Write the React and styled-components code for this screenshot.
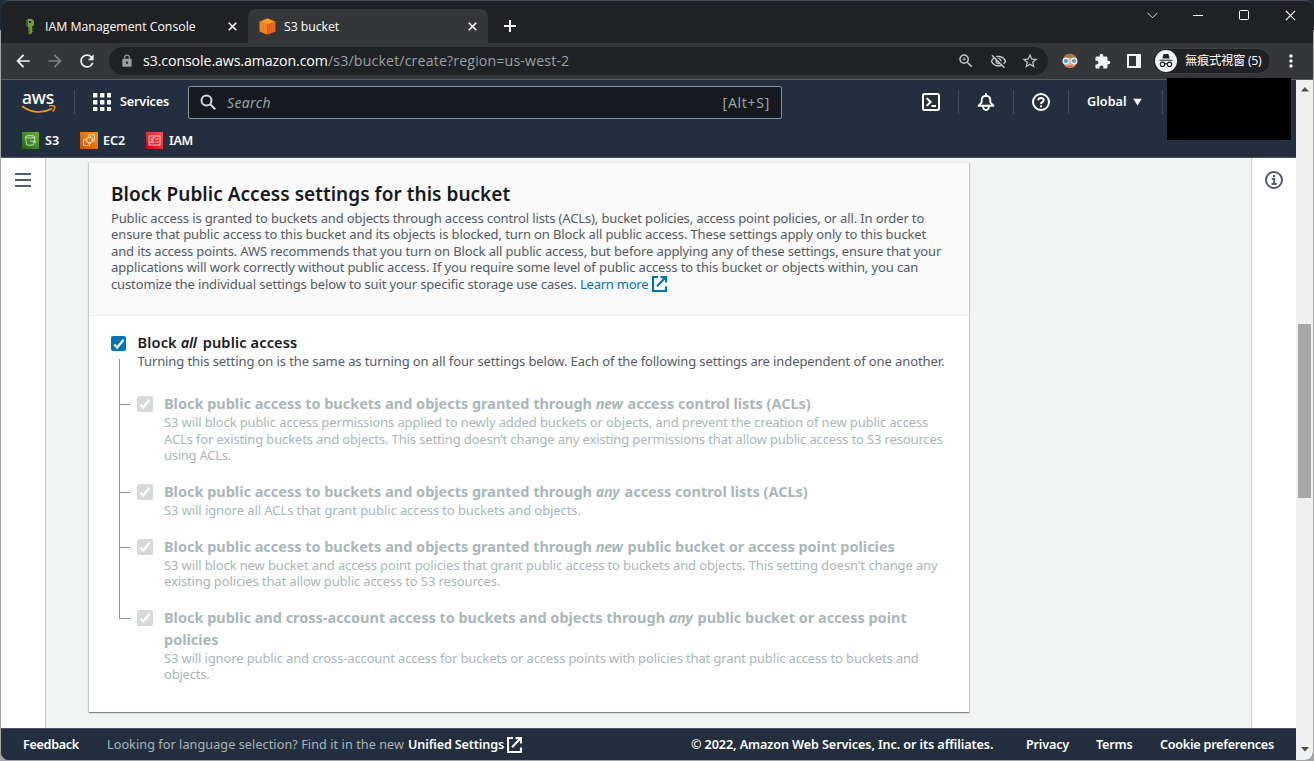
import React from 'react';
import styled, { createGlobalStyle, css } from 'styled-components';
import {
  MdArrowBack, MdArrowForward, MdRefresh, MdLock, MdZoomIn,
  MdOutlineVisibilityOff, MdStarOutline, MdExtension, MdMoreVert,
} from 'react-icons/md';

const ember = '"Noto Sans", "Open Sans", sans-serif';
const segoe = '"Open Sans", "Noto Sans", "Noto Sans CJK TC", sans-serif';

const GlobalStyle = createGlobalStyle`
  * { box-sizing: border-box; }
  body { margin: 0; background: #a3a5a8; font-family: ${ember}; overflow: hidden; }
  svg { display: block; flex: none; }
`;

/* ---------- window ---------- */
const Desktop = styled.div`
  height: 761px;
  padding: 0 1px 1px;
  background: linear-gradient(#1d2a38 30px, #a3a5a8 30px);
`;
const Window = styled.div`
  height: 760px;
  display: flex;
  flex-direction: column;
  overflow: hidden;
  border-top: 1px solid #46505a;
  border-radius: 8px;
  background: #202124;
`;
const TitleBar = styled.div`
  height: 42px;
  flex: none;
  display: flex;
  align-items: flex-end;
  color: #fff;
  font: 12.3px/18px ${segoe};
`;
const Tab = styled.div`
  height: 34px;
  width: ${p => p.$width}px;
  display: flex;
  align-items: center;
  padding: 0 11px 0 ${p => p.$pad}px;
  gap: 8px;
  ${p => p.$active && css`
    background: #35363a;
    border-radius: 8px 8px 0 0;
  `}
`;
const TabLabel = styled.span`
  flex: 1;
  padding: 2px 0 0 ${p => p.$inset || 0}px;
  white-space: nowrap;
  letter-spacing: ${p => p.$spacing || 0}px;
`;
const NewTab = styled.div`
  height: 34px;
  padding: 0 16px;
  display: flex;
  align-items: center;
`;
const WindowButtons = styled.div`
  margin-left: auto;
  align-self: flex-start;
  display: flex;
`;
const WindowButton = styled.div`
  width: 46px;
  height: 28px;
  display: flex;
  align-items: center;
  justify-content: center;
`;

/* ---------- toolbar ---------- */
const Toolbar = styled.div`
  height: 37px;
  flex: none;
  display: flex;
  align-items: center;
  padding: 0 4px 0 6px;
  background: #35363a;
  border-bottom: 1px solid #5b5c60;
`;
const ToolButton = styled.div`
  width: 32px;
  height: 28px;
  display: flex;
  align-items: center;
  justify-content: center;
  font-size: ${p => p.$size || 20}px;
  color: ${p => p.$color || '#f1f3f4'};
`;
const AddressBar = styled.div`
  width: 939px;
  height: 28px;
  margin: 0 6px;
  padding: 0 2px;
  display: flex;
  align-items: center;
  border-radius: 14px;
  background: #202124;
  font: 14.2px/20px ${segoe};
  color: #fff;
`;
const Host = styled.span`width: 185px; white-space: nowrap; letter-spacing: -0.11px;`;
const Path = styled.span`flex: 1; white-space: nowrap; letter-spacing: 0.14px; color: #9aa0a6;`;
const Incognito = styled.div`
  width: 119px;
  height: 26px;
  margin-left: 2px;
  padding-left: 2px;
  display: flex;
  align-items: center;
  gap: 8px;
  border: 1px solid #3f4044;
  border-radius: 13px;
  background: #202124;
  color: #fff;
  font: 12.3px/18px "Open Sans", "Noto Sans CJK TC", sans-serif;
  letter-spacing: -0.3px;
  white-space: nowrap;
`;
const Kebab = styled(ToolButton)`width: 20px; margin-left: 10px;`;

/* ---------- page ---------- */
const Viewport = styled.div`
  flex: 1;
  min-height: 0;
  display: flex;
`;
const Page = styled.div`
  width: 1295px;
  display: flex;
  flex-direction: column;
`;
const Nav = styled.header`
  position: relative;
  height: 78px;
  flex: none;
  background: #232f3e;
  border-bottom: 1px solid #4b545f;
  color: #fff;
  font-weight: 600;
`;
const NavRow = styled.div`
  height: 44px;
  padding: 0 133px 0 20px;
  display: flex;
  align-items: center;
`;
const AwsLogo = styled.div`
  width: 34px;
  height: 24px;
  display: flex;
  flex-direction: column;
  align-items: center;
`;
const AwsWord = styled.span`
  font: 500 17.5px/14px ${ember};
  letter-spacing: -0.2px;
  height: 16px;
`;
const Divider = styled.div`
  width: 1px;
  height: 24px;
  background: #414d5c;
`;
const NavText = styled.span`
  width: ${p => p.$width}px;
  font-size: 12.6px;
  line-height: 18px;
  letter-spacing: ${p => p.$spacing || 0}px;
  white-space: nowrap;
`;
const ServicesButton = styled.div`
  width: 113px;
  padding-left: 18px;
  display: flex;
  align-items: center;
  gap: 9px;
`;
const SearchBox = styled.div`
  width: 594px;
  height: 33px;
  padding: 0 11px 0 11px;
  display: flex;
  align-items: center;
  border: 1px solid #879596;
  border-radius: 2px;
  background: #16191f;
  color: #95a5a6;
  font-size: 14px;
  font-weight: 400;
`;
const SearchHint = styled.em`margin-left: 11px; flex: 1; letter-spacing: 0.35px;`;
const Shortcut = styled.span`letter-spacing: 0.7px;`;
const NavTools = styled.div`
  margin-left: auto;
  display: flex;
  align-items: center;
`;
const NavCell = styled.div`
  width: ${p => p.$width || 54}px;
  display: flex;
  align-items: center;
  justify-content: center;
  gap: 6px;
`;
const AccountBlock = styled.div`
  position: absolute;
  top: -2px;
  left: 1166px;
  width: 124px;
  height: 62px;
  background: #000;
`;
const Favorites = styled.div`
  height: 33px;
  padding-left: 21px;
  display: flex;
  align-items: center;
`;
const Favorite = styled.div`
  display: flex;
  align-items: center;
  gap: ${p => p.$gap || 6}px;
  width: ${p => p.$width}px;
`;

const Content = styled.div`
  flex: 1;
  min-height: 0;
  display: flex;
  background: #f2f3f3;
`;
const SideRail = styled.aside`
  width: 45px;
  flex: none;
  display: flex;
  justify-content: center;
  padding-top: ${p => p.$top}px;
  background: #fff;
  border: 0 solid #c9cfcf;
  border-${p => p.$edge}-width: 1px;
`;
const Main = styled.main`
  flex: 1;
  padding: 4px 0 0 43px;
`;
const Panel = styled.section`
  width: 880px;
  height: 550px;
  background: #fff;
  border-top: 1px solid #eaeded;
  box-shadow: 0 1px 1px rgba(0, 28, 36, 0.3), -1px 1px 1px rgba(0, 28, 36, 0.15), 1px 1px 1px rgba(0, 28, 36, 0.15);
`;
const PanelHead = styled.div`
  height: 153px;
  padding: 18px 22px 0;
  background: #fafafa;
  border-bottom: 1px solid #eaeded;
`;
const PanelTitle = styled.h2`
  margin: 0 0 1.6px;
  font-size: 19px;
  line-height: 27px;
  font-weight: 600;
  letter-spacing: 0.04px;
  color: #16191f;
`;
const Copy = styled.p`
  margin: 0;
  font-size: 13px;
  line-height: 16.5px;
  color: ${p => (p.$muted ? '#aab7b8' : '#545b64')};
`;
const Line = styled.span`
  display: block;
  height: 16.5px;
  white-space: nowrap;
  letter-spacing: ${p => p.$spacing ?? -0.135}px;
`;
const LinkText = styled.a`
  display: inline-flex;
  align-items: center;
  gap: 4px;
  height: 16px;
  color: #0073bb;
  letter-spacing: -0.25px;
`;
const PanelBody = styled.div`padding: 15px 22px 0;`;
const RootOption = styled.div`
  height: 61px;
  display: flex;
  gap: 11.5px;
`;
const RootMark = styled.div`
  width: 15px;
  padding-top: 5px;
  display: flex;
  flex-direction: column;
`;
const Trunk = styled.div`
  flex: 1;
  width: 1px;
  margin: 8px 0 0 8px;
  background: #879596;
`;
const Option = styled.div`
  margin-left: 8px;
  display: flex;
`;
const Rail = styled.div`
  width: 11px;
  margin-right: 7px;
  display: flex;
  flex-direction: column;
`;
const Elbow = styled.div`
  height: 13px;
  border: solid #879596;
  border-width: 0 0 1px 1px;
`;
const Stem = styled.div`
  flex: 1;
  border-left: 1px solid #879596;
`;
const Box = styled.span`
  flex: none;
  width: ${p => p.$size}px;
  height: ${p => p.$size}px;
  margin: ${p => (p.$muted ? '4px 11px 0 0' : '0')};
  display: flex;
  align-items: center;
  justify-content: center;
  border-radius: 2px;
  background: ${p => (p.$muted ? '#d5dbdb' : '#0073bb')};
`;
const OptionText = styled.div`padding-bottom: ${p => (p.$last ? 0 : 16.3)}px;`;
const OptionTitle = styled.div`
  font-size: ${p => (p.$muted ? 14.5 : 14.6)}px;
  line-height: 22px;
  font-weight: ${p => (p.$muted ? 700 : 600)};
  color: ${p => (p.$muted ? '#aab7b8' : '#16191f')};
  white-space: nowrap;
  letter-spacing: ${p => (p.$muted ? -0.02 : 0.13)}px;
  em { display: inline-block; width: ${p => p.$em}px; letter-spacing: ${p => (p.$muted ? -0.45 : -0.3)}px; }
`;

const Footer = styled.footer`
  height: 32px;
  flex: none;
  padding: 0 22px;
  display: flex;
  align-items: center;
  background: #232f3e;
  border-top: 1px solid #4b545f;
  color: #fff;
  font-size: 12.6px;
  font-weight: 600;
`;
const FooterText = styled.span`
  width: ${p => p.$width}px;
  margin-left: ${p => p.$gap || 0}px;
  white-space: nowrap;
  letter-spacing: ${p => p.$spacing || 0}px;
  ${p => p.$soft && css`color: #aab7b8; font-weight: 400;`}
`;

const ScrollBar = styled.div`
  flex: 1;
  display: flex;
  flex-direction: column;
  align-items: center;
  padding: 7px 0 8px;
  background: #f0f0f0;
`;
const Thumb = styled.div`
  width: 13px;
  height: 174px;
  margin: 232px 0 auto;
  background: #a8a8a8;
`;

/* ---------- drawings ---------- */
const Cross = ({ size = 9, w = 1.8 }) => (
  <svg width={size} height={size} viewBox="0 0 10 10" stroke="#fff" strokeWidth={w} fill="none"><path d="M.8.8l8.4 8.4M9.2.8L.8 9.2" /></svg>
);
const Check = () => (
  <svg width="12" height="12" viewBox="0 0 12 12" fill="none" stroke="#fff" strokeWidth="2.3"><path d="M1.2 6.5l3 3L10.6 1.8" /></svg>
);
const External = ({ color }) => (
  <svg width="15" height="16" viewBox="0 0 15 16" fill="none" stroke={color} strokeWidth="2.1">
    <path d="M6 1H1v14h13v-4.500M8.500 1.100H14V6.500M13.500 1.600L5 10.200" />
  </svg>
);
const KeyIcon = () => (
  <svg width="10" height="17" viewBox="0 0 10 17">
    <path fill="#759c3e" fillRule="evenodd" d="M3 1h4l2 2v4L7 9v6l-2 1.5L3 15V9L1 7V3zM4 3v2h2V3z" />
    <path fill="#4b612c" d="M1 3l2-2v8L1 7zM3.4 9h1.3v7L3 15zM7 10h1.5v1.3H7zM7 12.5h1.5V14H7z" />
  </svg>
);
const CubeIcon = () => (
  <svg width="17" height="17" viewBox="0 0 17 17">
    <path fill="#f8991d" d="M8.5.3l8 3.4-8 3.400-8-3.400z" />
    <path fill="#f58220" d="M.5 3.700l8 3.400v9.600l-8-3.200z" />
    <path fill="#e8641b" d="M16.500 3.700l-8 3.400v9.600l8-3.200z" />
  </svg>
);
const Face = () => (
  <svg width="16" height="16" viewBox="0 0 16 16">
    <circle cx="8" cy="8" r="7" fill="#dba97e" />
    <path d="M1.5 6C2 2.5 5 .8 8 .8s6 1.700 6.500 5.200L8 4.500z" fill="#a57a4a" />
    <path d="M5 12q3 1.500 6 0l-1 2.500H6z" fill="#e06050" />
    <g stroke="#e8eef0" strokeWidth="1.500" fill="#4c9cb8"><circle cx="4" cy="8" r="2.800" /><circle cx="12" cy="8" r="2.800" /></g>
  </svg>
);
const Spy = () => (
  <svg width="22" height="22" viewBox="0 0 22 22">
    <circle cx="11" cy="11" r="11" fill="#f1f3f4" />
    <path d="M7.300 8.500l1.200-4.200q.3-.8 1.100-.4l1.400.4 1.400-.4q.8-.4 1.100.4l1.200 4.200z" fill="#202124" />
    <path d="M4.500 10.200h13" stroke="#202124" strokeWidth="1.100" />
    <g fill="none" stroke="#202124" strokeWidth="1.200"><circle cx="7.500" cy="14.300" r="2.200" /><circle cx="14.500" cy="14.300" r="2.200" /><path d="M9.700 14q1.300-.8 2.600 0" /></g>
  </svg>
);
const Apps = () => (
  <svg width="18" height="18" viewBox="0 0 18 18" fill="#fff">
    {[0, 7, 14].map(y => [0, 7, 14].map(x => <rect key={`${x}-${y}`} x={x} y={y} width="4.400" height="4.400" rx=".5" />))}
  </svg>
);
const Smile = () => (
  <svg width="35" height="9" viewBox="0 0 35 9">
    <path d="M1 1.300Q16 11.500 31 3.400" fill="none" stroke="#f90" strokeWidth="1.700" />
    <path d="M28 .9q4-.7 5.700.5.5 2.800-2 5.100" fill="none" stroke="#f90" strokeWidth="1.400" />
  </svg>
);
const Grads = () => (
  <svg width="0" height="0">
    <defs>
      <linearGradient id="g" x1="0" y1="1" x2="1" y2="0"><stop stopColor="#1b660f" /><stop offset="1" stopColor="#6cae3e" /></linearGradient>
      <linearGradient id="o" x1="0" y1="1" x2="1" y2="0"><stop stopColor="#c8511b" /><stop offset="1" stopColor="#f90" /></linearGradient>
      <linearGradient id="r" x1="0" y1="1" x2="1" y2="0"><stop stopColor="#bd0816" /><stop offset="1" stopColor="#ff5252" /></linearGradient>
    </defs>
  </svg>
);
const S3Icon = () => (
  <svg width="17" height="17" viewBox="0 0 17 17"><rect width="17" height="17" fill="url(#g)" />
    <g fill="none" stroke="#e6f0e0" strokeWidth=".8"><path d="M3.500 4.800l1.200 8q3.500 1 7 0l1.200-8" /><ellipse cx="8.200" cy="4.800" rx="4.700" ry="1.200" /><path d="M8 8.800l5.500 1.500q1-.5-.9-2" /></g></svg>
);
const Ec2Icon = () => (
  <svg width="18" height="17" viewBox="0 0 18 17"><rect width="18" height="17" fill="url(#o)" />
    <g fill="none" stroke="#fdebd8" strokeWidth=".8"><rect x="7" y="5.500" width="5" height="5" rx=".8" /><path d="M8.500 3.800V5.500M10.500 3.800V5.500M8.500 10.500v1.500M10.500 10.500v1.500M12 7h1.800M12 9h1.800M5.200 7H7M5.200 9H7M5.500 7.500H3.500v6h6v-2M8.500 3.500V2.800h6v6h-1" /></g></svg>
);
const IamIcon = () => (
  <svg width="17" height="17" viewBox="0 0 17 17"><rect width="17" height="17" fill="url(#r)" />
    <g fill="none" stroke="#ffe3e5" strokeWidth=".8"><rect x="3" y="4" width="11" height="9" /><circle cx="6.200" cy="7.200" r="1.100" /><path d="M4.500 10.700q0-2 1.700-2t1.700 2zM9.500 7h3M9.500 10h3M7 5.700h2" /></g></svg>
);

/* ---------- data ---------- */
const intro = [
  ['Public access is granted to buckets and objects through access control lists (ACLs), bucket policies, access point policies, or all. In order to', -0.14],
  ['ensure that public access to this bucket and its objects is blocked, turn on Block all public access. These settings apply only to this bucket', -0.115],
  ['and its access points. AWS recommends that you turn on Block all public access, but before applying any of these settings, ensure that your', -0.13],
  ['applications will work correctly without public access. If you require some level of public access to this bucket or objects within, you can', -0.11],
];
const options = [
  {
    title: ['Block public access to buckets and objects granted through', 'new', 'access control lists (ACLs)'], em: 28,
    lines: [
      ['S3 will block public access permissions applied to newly added buckets or objects, and prevent the creation of new public access', -0.12],
      ['ACLs for existing buckets and objects. This setting doesn’t change any existing permissions that allow public access to S3 resources', -0.135],
      ['using ACLs.', -0.26],
    ],
  },
  {
    title: ['Block public access to buckets and objects granted through', 'any', 'access control lists (ACLs)'], em: 25,
    lines: [['S3 will ignore all ACLs that grant public access to buckets and objects.', -0.09]],
  },
  {
    title: ['Block public access to buckets and objects granted through', 'new', 'public bucket or access point policies'], em: 28,
    lines: [
      ["S3 will block new bucket and access point policies that grant public access to buckets and objects. This setting doesn't change any", -0.12],
      ['existing policies that allow public access to S3 resources.', -0.125],
    ],
  },
  {
    title: ['Block public and cross-account access to buckets and objects through', 'any', 'public bucket or access point'], em: 25, rest: 'policies',
    lines: [
      ['S3 will ignore public and cross-account access for buckets or access points with policies that grant public access to buckets and', -0.135],
      ['objects.', -0.2],
    ],
  },
];

export default function App() {
  return (
    <Desktop>
      <GlobalStyle />
      <Window>
        <TitleBar>
          <Tab $width={247} $pad={24}>
            <KeyIcon />
            <TabLabel $inset={2}>IAM Management Console</TabLabel>
            <Cross />
          </Tab>
          <Tab $width={240} $pad={11} $active>
            <CubeIcon />
            <TabLabel $spacing={-0.06}>S3 bucket</TabLabel>
            <Cross />
          </Tab>
          <NewTab>
            <svg width="12" height="12" viewBox="0 0 12 12" stroke="#fff" strokeWidth="2"><path d="M6 0v12M0 6h12" /></svg>
          </NewTab>
          <WindowButtons>
            <WindowButton><svg width="11" height="7" viewBox="0 0 11 7" fill="none" stroke="#ddd"><path d="M.5.8l5 5 5-5" /></svg></WindowButton>
            <WindowButton><svg width="10" height="10" viewBox="0 0 10 10" stroke="#fff"><path d="M0 5.500h10" /></svg></WindowButton>
            <WindowButton><svg width="10" height="10" viewBox="0 0 10 10" fill="none" stroke="#fff"><rect x=".5" y=".5" width="9" height="9" rx="1" /></svg></WindowButton>
            <WindowButton><Cross size={11} w={1.1} /></WindowButton>
          </WindowButtons>
        </TitleBar>

        <Toolbar>
          <ToolButton><MdArrowBack /></ToolButton>
          <ToolButton $color="#7d7f83"><MdArrowForward /></ToolButton>
          <ToolButton><MdRefresh /></ToolButton>
          <AddressBar>
            <ToolButton $size={14} $color="#9aa0a6"><MdLock /></ToolButton>
            <Host>s3.console.aws.amazon.com</Host>
            <Path>/s3/bucket/create?region=us-west-2</Path>
            <ToolButton $size={18} $color="#c4c7cb"><MdZoomIn /></ToolButton>
            <ToolButton $size={17} $color="#c4c7cb"><MdOutlineVisibilityOff /></ToolButton>
            <ToolButton $size={18} $color="#c4c7cb"><MdStarOutline /></ToolButton>
          </AddressBar>
          <ToolButton><Face /></ToolButton>
          <ToolButton $size={17}><MdExtension /></ToolButton>
          <ToolButton>
            <svg width="14" height="14" viewBox="0 0 14 14"><path fill="#f1f3f4" fillRule="evenodd" d="M0 0h14v14H0zM2 2v10h7V2z" /></svg>
          </ToolButton>
          <Incognito><Spy />無痕式視窗 (5)</Incognito>
          <Kebab><MdMoreVert /></Kebab>
        </Toolbar>

        <Viewport>
          <Page>
            <Nav>
              <NavRow>
                <AwsLogo><AwsWord>aws</AwsWord><Smile /></AwsLogo>
                <NavCell $width={19} />
                <Divider />
                <ServicesButton><Apps /><NavText $width={49} $spacing={-0.13}>Services</NavText></ServicesButton>
                <SearchBox>
                  <svg width="16" height="16" viewBox="0 0 16 16" fill="none" stroke="#d5dbdb" strokeWidth="2"><circle cx="6.500" cy="6.500" r="5" /><path d="M10.200 10.200l5 5" /></svg>
                  <SearchHint>Search</SearchHint>
                  <Shortcut>[Alt+S]</Shortcut>
                </SearchBox>
                <NavTools>
                  <NavCell>
                    <svg width="18" height="18" viewBox="0 0 18 18" fill="none" stroke="#fff" strokeWidth="2"><rect x="1" y="1" width="16" height="16" rx="1.500" /><path d="M4.500 5l4.200 4-4.200 4M9.500 13h4.500" /></svg>
                  </NavCell>
                  <Divider />
                  <NavCell>
                    <svg width="18" height="18" viewBox="0 0 18 18" fill="none" stroke="#fff" strokeWidth="1.900" strokeLinejoin="round"><path d="M1.500 12.800h15L13.300 9.300V6.500Q12.900 2.900 9 2.700 5.100 2.900 4.700 6.500v2.800zM9 .2v2.500M6 13q.2 4 3 4t3-4" /></svg>
                  </NavCell>
                  <Divider />
                  <NavCell>
                    <svg width="18" height="18" viewBox="0 0 18 18" fill="none" stroke="#fff" strokeWidth="2"><circle cx="9" cy="9" r="8" /><path d="M6.300 7.300Q6.300 5 9 5t2.600 2.200q0 1.300-1.400 1.900Q9 9.700 9 11M9 12.200v2" /></svg>
                  </NavCell>
                  <Divider />
                  <NavCell $width={91}>
                    <NavText $width={40} $spacing={0.05}>Global</NavText>
                    <svg width="9" height="8" viewBox="0 0 10 8" fill="#fff"><path d="M.3.5h9.400L5 7.800z" /></svg>
                  </NavCell>
                  <NavCell $width={2} />
                  <Divider />
                </NavTools>
              </NavRow>
              <Favorites>
                <Favorite $width={58}><S3Icon /><NavText>S3</NavText></Favorite>
                <Favorite $width={66} $gap={5}><Ec2Icon /><NavText $spacing={-0.05}>EC2</NavText></Favorite>
                <Favorite $width={60}><IamIcon /><NavText $spacing={-0.25}>IAM</NavText></Favorite>
              </Favorites>
              <AccountBlock />
            </Nav>

            <Content>
              <SideRail $edge="right" $top={15}>
                <svg width="16" height="15" viewBox="0 0 16 15" fill="#545b64"><path d="M0 0h16v2H0zM0 6h16v2H0zM0 12h16v2H0z" /></svg>
              </SideRail>
              <Main>
                <Panel>
                  <PanelHead>
                    <PanelTitle>Block Public Access settings for this bucket</PanelTitle>
                    <Copy>
                      {intro.map(([text, spacing]) => <Line key={text} $spacing={spacing}>{text}</Line>)}
                      <Line>
                        customize the individual settings below to suit your specific storage use cases.{' '}
                        <LinkText>Learn more <External color="#0073bb" /></LinkText>
                      </Line>
                    </Copy>
                  </PanelHead>
                  <PanelBody>
                    <RootOption>
                      <RootMark><Box $size={15}><Check /></Box><Trunk /></RootMark>
                      <div>
                        <OptionTitle $em={18}>Block <em>all</em> public access</OptionTitle>
                        <Copy><Line $spacing={-0.1}>Turning this setting on is the same as turning on all four settings below. Each of the following settings are independent of one another.</Line></Copy>
                      </div>
                    </RootOption>
                    {options.map((o, i) => (
                      <Option key={i}>
                        <Rail><Elbow />{i < options.length - 1 && <Stem />}</Rail>
                        <Box $size={16} $muted><Check /></Box>
                        <OptionText $last={i === options.length - 1}>
                          <OptionTitle $muted $em={o.em}>
                            {o.title[0]} <em>{o.title[1]}</em> {o.title[2]}
                            {o.rest && <><br />{o.rest}</>}
                          </OptionTitle>
                          <Copy $muted>
                            {o.lines.map(([text, spacing]) => <Line key={text} $spacing={spacing}>{text}</Line>)}
                          </Copy>
                        </OptionText>
                      </Option>
                    ))}
                  </PanelBody>
                </Panel>
              </Main>
              <SideRail $edge="left" $top={13}>
                <svg width="18" height="18" viewBox="0 0 18 18" fill="none" stroke="#545b64" strokeWidth="2"><circle cx="9" cy="9" r="8" /><path d="M6.800 7.800H9.200V13M6.500 12.900h5.200M8 5h2.200" /></svg>
              </SideRail>
            </Content>

            <Footer>
              <FooterText $width={56} $spacing={-0.3}>Feedback</FooterText>
              <FooterText $width={301} $gap={28} $spacing={0.09} $soft>Looking for language selection? Find it in the new</FooterText>
              <FooterText $width={99} $spacing={-0.12}>Unified Settings</FooterText>
              <External color="#fff" />
              <FooterText $width={302} $gap={169} $spacing={-0.09}>© 2022, Amazon Web Services, Inc. or its affiliates.</FooterText>
              <FooterText $width={43} $gap={33} $spacing={-0.18}>Privacy</FooterText>
              <FooterText $width={37} $gap={27} $spacing={-0.18}>Terms</FooterText>
              <FooterText $width={114} $gap={27} $spacing={-0.24}>Cookie preferences</FooterText>
            </Footer>
          </Page>
          <ScrollBar>
            <svg width="8" height="5" viewBox="0 0 8 5" fill="#505050"><path d="M0 4.500L4 0l4 4.500z" /></svg>
            <Thumb />
            <svg width="8" height="5" viewBox="0 0 8 5" fill="#505050"><path d="M0 0l4 4.500L8 0z" /></svg>
          </ScrollBar>
        </Viewport>
      </Window>
      <Grads />
    </Desktop>
  );
}
